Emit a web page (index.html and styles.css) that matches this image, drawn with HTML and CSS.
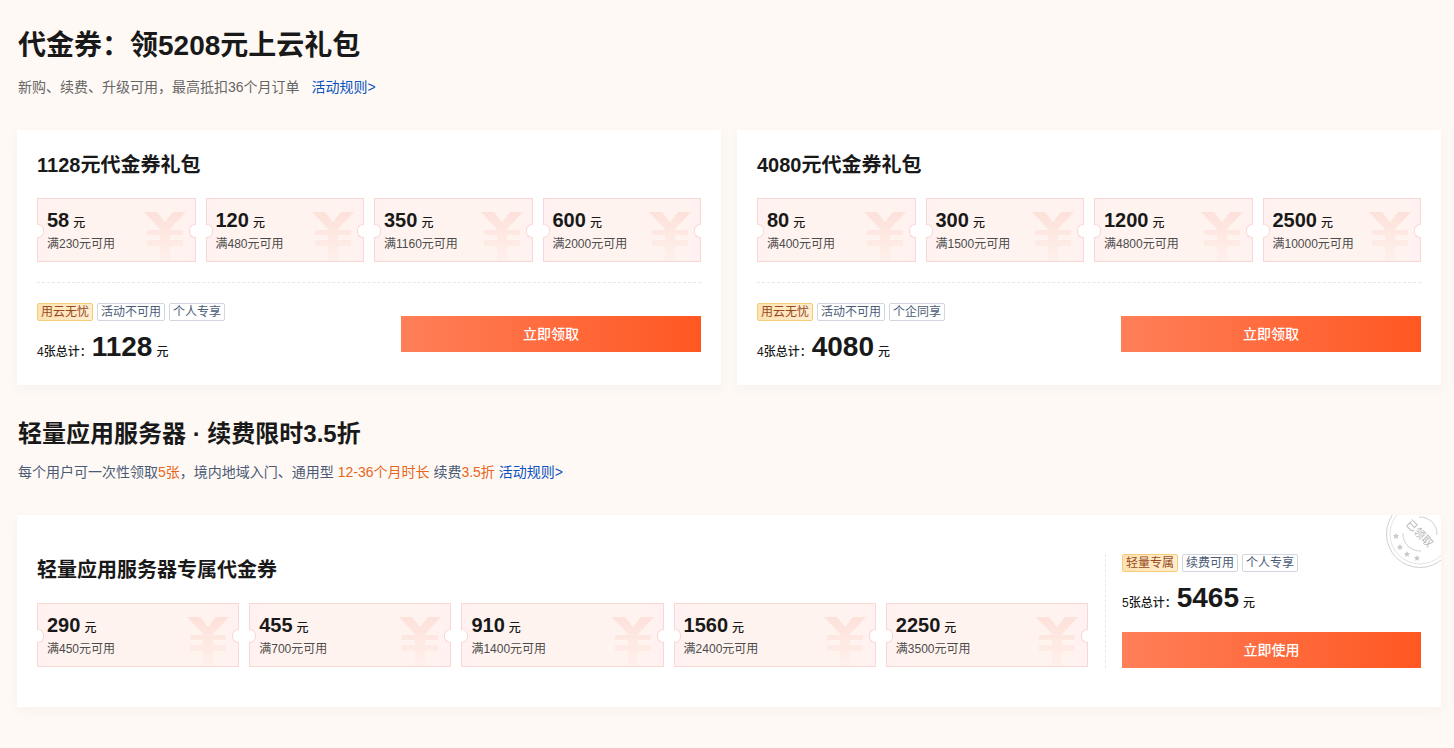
FILE: index.html
```html
<!DOCTYPE html>
<html lang="zh-CN">
<head>
    <meta charset="UTF-8">
    <meta name="viewport" content="width=device-width, initial-scale=1.0">
    <title>代金券</title>
    <link rel="stylesheet" href="styles.css">
</head>
<body>
    <!-- 人民币符号和星星，重复使用 -->
    <svg class="defs" width="0" height="0" aria-hidden="true">
        <defs>
            <linearGradient id="yenFill" x1="0" y1="0" x2="0" y2="1">
                <stop offset="0" stop-color="#fde1da"/>
                <stop offset="1" stop-color="#fff0eb"/>
            </linearGradient>
            <symbol id="yen" viewBox="0 0 42 49">
                <path fill="url(#yenFill)" d="M0 0H13L21 10L29 0H42L26 17V18H39V23H26V28H39V34H26V49H16V34H3V28H16V23H3V18H16V17Z"/>
            </symbol>
            <symbol id="star" viewBox="0 0 10 10">
                <path fill="#c8c8c8" d="M5 0L6.5 3.2L10 3.7L7.5 6.2L8.1 9.8L5 8.1L1.9 9.8L2.5 6.2L0 3.7L3.5 3.2Z"/>
            </symbol>
        </defs>
    </svg>

    <main class="page">
        <header class="section-head">
            <h1>代金券：领5208元上云礼包</h1>
            <p class="desc">新购、续费、升级可用，最高抵扣36个月订单<a class="rule-link" href="#">活动规则&gt;</a></p>
        </header>

        <div class="packs">
            <section class="card">
                <h3>1128元代金券礼包</h3>
                <ul class="coupons">
                    <li class="coupon"><p class="amount">58<span class="unit">元</span></p><p class="limit">满230元可用</p><svg class="yen"><use href="#yen"/></svg></li>
                    <li class="coupon"><p class="amount">120<span class="unit">元</span></p><p class="limit">满480元可用</p><svg class="yen"><use href="#yen"/></svg></li>
                    <li class="coupon"><p class="amount">350<span class="unit">元</span></p><p class="limit">满1160元可用</p><svg class="yen"><use href="#yen"/></svg></li>
                    <li class="coupon"><p class="amount">600<span class="unit">元</span></p><p class="limit">满2000元可用</p><svg class="yen"><use href="#yen"/></svg></li>
                </ul>
                <div class="card-foot">
                    <div>
                        <div class="tags"><span class="tag hot">用云无忧</span><span class="tag">活动不可用</span><span class="tag">个人专享</span></div>
                        <p class="total">4张总计：<strong>1128</strong><span class="unit">元</span></p>
                    </div>
                    <button class="btn" type="button">立即领取</button>
                </div>
            </section>

            <section class="card">
                <h3>4080元代金券礼包</h3>
                <ul class="coupons">
                    <li class="coupon"><p class="amount">80<span class="unit">元</span></p><p class="limit">满400元可用</p><svg class="yen"><use href="#yen"/></svg></li>
                    <li class="coupon"><p class="amount">300<span class="unit">元</span></p><p class="limit">满1500元可用</p><svg class="yen"><use href="#yen"/></svg></li>
                    <li class="coupon"><p class="amount">1200<span class="unit">元</span></p><p class="limit">满4800元可用</p><svg class="yen"><use href="#yen"/></svg></li>
                    <li class="coupon"><p class="amount">2500<span class="unit">元</span></p><p class="limit">满10000元可用</p><svg class="yen"><use href="#yen"/></svg></li>
                </ul>
                <div class="card-foot">
                    <div>
                        <div class="tags"><span class="tag hot">用云无忧</span><span class="tag">活动不可用</span><span class="tag">个企同享</span></div>
                        <p class="total">4张总计：<strong>4080</strong><span class="unit">元</span></p>
                    </div>
                    <button class="btn" type="button">立即领取</button>
                </div>
            </section>
        </div>

        <header class="section-head second">
            <h2>轻量应用服务器 · 续费限时3.5折</h2>
            <p class="desc blue">每个用户可一次性领取<em>5张</em>，境内地域入门、通用型 <em>12-36个月时长</em> 续费<em>3.5折</em> <a href="#">活动规则&gt;</a></p>
        </header>

        <section class="card wide">
            <div class="wide-main">
                <h3>轻量应用服务器专属代金券</h3>
                <ul class="coupons">
                    <li class="coupon"><p class="amount">290<span class="unit">元</span></p><p class="limit">满450元可用</p><svg class="yen"><use href="#yen"/></svg></li>
                    <li class="coupon"><p class="amount">455<span class="unit">元</span></p><p class="limit">满700元可用</p><svg class="yen"><use href="#yen"/></svg></li>
                    <li class="coupon"><p class="amount">910<span class="unit">元</span></p><p class="limit">满1400元可用</p><svg class="yen"><use href="#yen"/></svg></li>
                    <li class="coupon"><p class="amount">1560<span class="unit">元</span></p><p class="limit">满2400元可用</p><svg class="yen"><use href="#yen"/></svg></li>
                    <li class="coupon"><p class="amount">2250<span class="unit">元</span></p><p class="limit">满3500元可用</p><svg class="yen"><use href="#yen"/></svg></li>
                </ul>
            </div>
            <div class="wide-side">
                <div class="tags"><span class="tag hot">轻量专属</span><span class="tag">续费可用</span><span class="tag">个人专享</span></div>
                <p class="total">5张总计：<strong>5465</strong><span class="unit">元</span></p>
                <button class="btn" type="button">立即使用</button>
            </div>
            <!-- 已领取印章 -->
            <svg class="stamp" viewBox="0 0 56 54">
                <g fill="none" stroke="#d0d0d0">
                    <circle cx="35" cy="19" r="33.5"/>
                    <circle cx="35" cy="19" r="30" stroke-width="0.6"/>
                    <path d="M18 18A17 17 0 0 0 36 36"/>
                    <path d="M34 2A17 17 0 0 1 52 20"/>
                </g>
                <use href="#star" x="8" y="18" width="6" height="6"/>
                <use href="#star" x="12" y="29" width="6" height="6"/>
                <use href="#star" x="19" y="36" width="6" height="6"/>
                <use href="#star" x="29" y="40" width="6" height="6"/>
                <text x="34" y="22" text-anchor="middle" transform="rotate(45 34 19)">已领取</text>
            </svg>
        </section>
    </main>
</body>
</html>
```
FILE: styles.css
```css
* {
    box-sizing: border-box;
}

body {
    margin: 0;
    background-color: #fff9f5;
    color: #191919;
    font-family: "Liberation Sans", "Noto Sans CJK SC", sans-serif;
    font-size: 12px;
}

h1, h2, h3, p, ul {
    margin: 0;
    padding: 0;
}

a {
    color: #0a52bf;
    text-decoration: none;
}

.defs {
    position: absolute;
}

.page {
    padding: 25px 13px 40px 17px;
}

.section-head {
    padding-left: 1px;
    margin-bottom: 32px;
}

.section-head.second {
    margin-top: 28px;
}

h1 {
    font-size: 28px;
    line-height: 42px;
    margin-bottom: 9px;
}

h2 {
    font-size: 24px;
    line-height: 42px;
    margin-bottom: 6px;
}

h3 {
    font-size: 20px;
    line-height: 30px;
    margin-bottom: 18px;
}

.desc {
    font-size: 14px;
    line-height: 22px;
    color: #666;
}

.desc.blue {
    color: #4b5b76;
}

.desc em {
    font-style: normal;
    color: #e8651a;
}

.rule-link {
    margin-left: 12px;
}

.packs {
    display: grid;
    grid-template-columns: 1fr 1fr;
    gap: 16px;
}

.card {
    padding: 20px;
    background-color: #fff;
    box-shadow: 0 4px 12px rgba(54, 42, 42, 0.04);
}

.coupons {
    display: flex;
    gap: 10px;
    list-style: none;
}

.coupon {
    position: relative;
    flex: 1;
    height: 64px;
    padding: 9px;
    border: 1px solid #f8d8d4;
    background: linear-gradient(90deg, #fff1f1, #fff3ef 12%, #fff3ef 88%, #fff1f1);
}

/* 左右两侧的缺口 */
.coupon::before,
.coupon::after {
    content: "";
    position: absolute;
    top: 25px;
    width: 6px;
    height: 12px;
    border: 1px solid #f8d8d4;
    background-color: #fff;
}

.coupon::before {
    left: -1px;
    border-left: none;
    border-radius: 0 6px 6px 0;
}

.coupon::after {
    right: -1px;
    border-right: none;
    border-radius: 6px 0 0 6px;
}

.amount {
    margin-bottom: 2px;
    font-size: 20px;
    font-weight: bold;
    line-height: 24px;
}

.unit {
    margin-left: 4px;
    font-size: 12px;
    font-weight: 500;
    line-height: 1;
}

.limit {
    line-height: 20px;
    color: #4c4c4c;
}

.yen {
    position: absolute;
    right: 9px;
    bottom: 0;
    width: 42px;
    height: 49px;
}

.card-foot {
    display: flex;
    justify-content: space-between;
    align-items: center;
    margin-top: 20px;
    padding-top: 20px;
    border-top: 1px dashed #e8e8e8;
}

.tags {
    display: flex;
    gap: 4px;
}

.tag {
    height: 18px;
    padding: 0 3px;
    border: 1px solid #d2d6de;
    border-radius: 2px;
    line-height: 16px;
    color: #4b5b76;
}

.tag.hot {
    border-color: #f5cd78;
    background: linear-gradient(90deg, #ffe2b3, #ffedcf);
    color: #964a1e;
}

.total {
    margin-top: 8px;
    line-height: 24px;
    font-weight: 500;
}

.total strong {
    font-size: 28px;
    line-height: 36px;
}

.btn {
    width: 300px;
    height: 36px;
    padding: 0 0 2px;
    border: none;
    background: linear-gradient(90deg, #ff7f59, #ff5722);
    color: #fff;
    font-family: inherit;
    font-size: 14px;
    font-weight: 500;
    cursor: pointer;
}

.btn:hover {
    opacity: 0.9;
}

.card.wide {
    position: relative;
    display: flex;
    align-items: center;
    gap: 17px;
    padding: 39px 20px;
}

.wide-main {
    flex: 1;
}

.wide-side {
    width: 316px;
    padding-left: 16px;
    border-left: 1px dashed #e8e8e8;
}

.wide-side .btn {
    display: block;
    width: 100%;
    margin-top: 16px;
}

.stamp {
    position: absolute;
    top: 0;
    right: 0;
    width: 56px;
    height: 54px;
}

.stamp text {
    font-size: 11px;
    fill: #b8b8b8;
}
```
